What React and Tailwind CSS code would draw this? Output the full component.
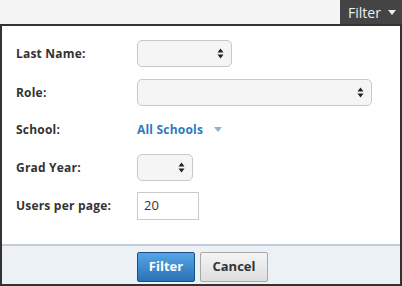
export default function App() {
  const Arrows = () => (
    <svg width="7" height="11" viewBox="0 0 7 11" className="shrink-0">
      <path d="M3.5 0.5 L6.5 4.5 L0.5 4.5 Z" fill="#222" />
      <path d="M3.5 10.5 L6.5 6.5 L0.5 6.5 Z" fill="#222" />
    </svg>
  );
  const Select = ({ w }) => (
    <div className={`${w} h-[27px] rounded-[5px] border border-[#c8c8c8] bg-[#f5f5f5] flex items-center justify-end pr-[7px]`}>
      <Arrows />
    </div>
  );
  const Row = ({ label, children, h }) => (
    <div className={`flex items-center ${h}`}>
      <div className="w-[121px] text-[12px] font-bold text-[#333] tracking-[0.2px]">{label}</div>
      {children}
    </div>
  );
  return (
    <div className="w-[402px] h-[286px] bg-[#f4f4f4] flex flex-col" style={{ fontFamily: '"Open Sans", "Liberation Sans", sans-serif' }}>
      <div className="h-[24px] flex justify-end shrink-0">
        <div className="w-[62px] h-[24px] bg-[#444] flex items-center justify-center gap-[7px] text-[#eee] text-[14px] pl-[2px]">
          <span>Filter</span>
          <svg width="8" height="5" viewBox="0 0 8 5"><path d="M0 0 L8 0 L4 5 Z" fill="#eee" /></svg>
        </div>
      </div>
      <div className="flex-1 border-x-2 border-t-2 border-b-2 border-[#333] bg-white flex flex-col">
        <div className="flex flex-col pl-[14px] pt-[14px] h-[218px]">
          <Row label="Last Name:" h="h-[27px]"><Select w="w-[95px]" /></Row>
          <div className="h-[12px]" />
          <Row label="Role:" h="h-[27px]"><Select w="w-[235px]" /></Row>
          <div className="h-[10px]" />
          <Row label="School:" h="h-[27px]">
            <div className="flex items-center gap-[11px] text-[12px] font-bold text-[#2b7bbd] tracking-[0.2px]">
              <span>All Schools</span>
              <svg width="8" height="5" viewBox="0 0 8 5"><path d="M0 0 L8 0 L4 5 Z" fill="#8fb3d3" /></svg>
            </div>
          </Row>
          <div className="h-[11px]" />
          <Row label="Grad Year:" h="h-[27px]"><Select w="w-[56px]" /></Row>
          <div className="h-[11px]" />
          <Row label="Users per page:" h="h-[27px]">
            <div className="w-[62px] h-[28px] border border-[#ccc] bg-white flex items-center pl-[6px] text-[13px] text-[#333]">20</div>
          </Row>
        </div>
        <div className="flex-1 border-t-2 border-[#c3ccd8] bg-[#ecf1f6] flex items-start pt-[6px] pl-[135px] gap-[5px]">
          <div className="w-[58px] h-[30px] rounded-[2px] border border-[#1d4f7e] bg-gradient-to-b from-[#55a6e6] to-[#2a72b5] flex items-center justify-center text-white text-[13px] font-bold">Filter</div>
          <div className="w-[68px] h-[30px] rounded-[2px] border border-[#a8a8a8] bg-gradient-to-b from-[#f4f4f4] to-[#dedede] flex items-center justify-center text-[#333] text-[13px] font-bold">Cancel</div>
        </div>
      </div>
    </div>
  );
}
